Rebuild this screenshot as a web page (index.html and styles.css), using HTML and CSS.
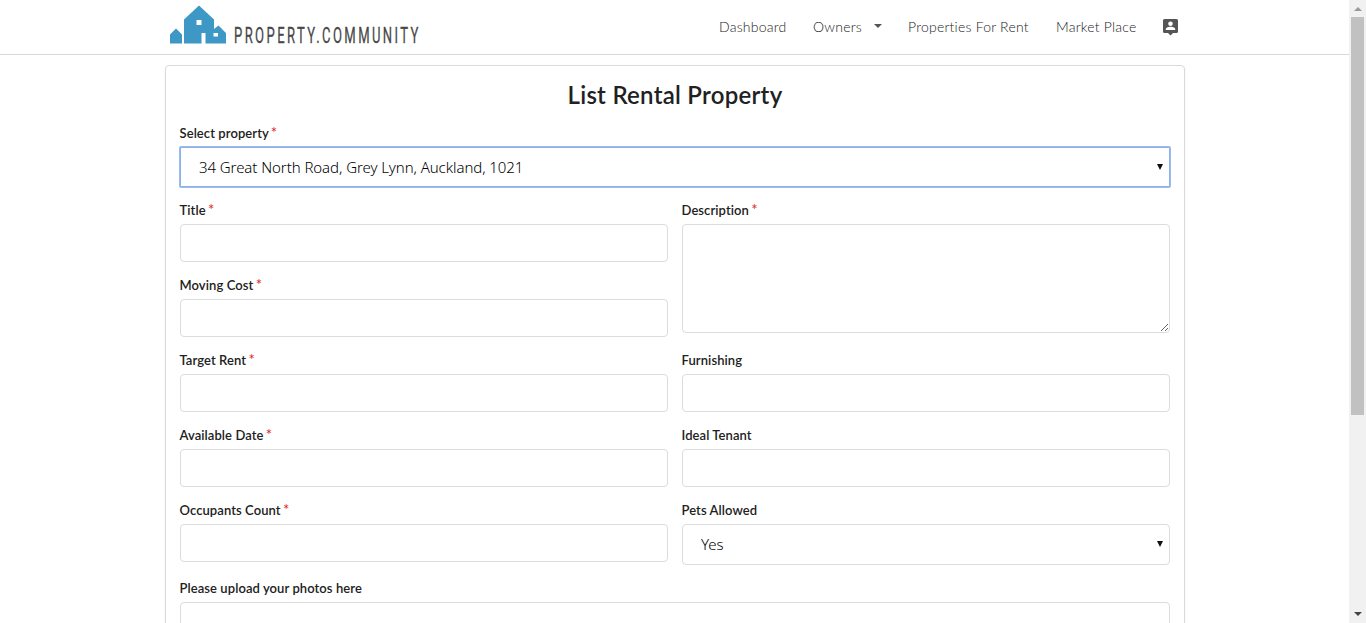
FILE: index.html
```html
<!DOCTYPE html>
<html lang="en">
<head>
<meta charset="utf-8">
<title>List Rental Property</title>
<link rel="stylesheet" href="styles.css">
</head>
<body>
<div class="page">
  <header class="topbar">
    <a class="brand">
      <svg class="logo" width="260" height="54" viewBox="0 0 260 54">
        <path fill="#3e98c5" d="M5 43.500V34.500L11 28.500L17 34.500V43.500ZM19 43.500V19.500L34 5.500L49 19.500V29L53.500 25.500L61 33V43.500H40.500V33H36.500V43.500Z"/>
        <path fill="#fff" d="M31.500 20H36.500V25H31.500ZM48.500 33H53V36.500H48.500Z"/>
        <text class="brand-text" x="119" y="43.500" textLength="318" lengthAdjust="spacing" transform="scale(.58 1)">PROPERTY.COMMUNITY</text>
      </svg>
    </a>
    <nav class="menu">
      <a class="dash">Dashboard</a>
      <a class="owners">Owners<i class="caret"></i></a>
      <a class="rent">Properties For Rent</a>
      <a class="market">Market Place</a>
      <svg class="user" width="15" height="17" viewBox="0 0 15 17"><path fill="#555" d="M1.500 0h12A1.500 1.500 0 0 1 15 1.500v11a1.500 1.500 0 0 1-1.500 1.500H10l-2.500 2.500L5 14H1.500A1.500 1.500 0 0 1 0 12.500v-11A1.500 1.500 0 0 1 1.500 0z"/><circle cx="7.500" cy="4.700" r="2.300" fill="#fff"/><path fill="#fff" d="M2.800 11V10c0-1.500 3-2.300 4.700-2.300s4.700.8 4.700 2.300v1z"/></svg>
    </nav>
  </header>
  <main class="card">
    <h1>List Rental Property</h1>
    <form class="grid">
      <div class="field wide"><label>Select property <b>*</b></label><div class="pick focus"><select><option>34 Great North Road, Grey Lynn, Auckland, 1021</option></select></div></div>
      <div class="field"><label>Title <b>*</b></label><input type="text"></div>
      <div class="field tall"><label>Description <b>*</b></label><textarea></textarea></div>
      <div class="field"><label>Moving Cost <b>*</b></label><input type="text"></div>
      <div class="field"><label>Target Rent <b>*</b></label><input type="text"></div>
      <div class="field"><label>Furnishing</label><input type="text"></div>
      <div class="field"><label>Available Date <b>*</b></label><input type="text"></div>
      <div class="field"><label>Ideal Tenant</label><input type="text"></div>
      <div class="field"><label>Occupants Count <b>*</b></label><input type="text"></div>
      <div class="field"><label>Pets Allowed</label><div class="pick"><select><option>Yes</option></select></div></div>
      <div class="field wide"><label>Please upload your photos here</label><div class="upload"></div></div>
    </form>
  </main>
</div>
<aside class="scrollbar"><i class="up"></i><div class="thumb"></div><i class="down"></i></aside>
</body>
</html>
```
FILE: styles.css
```css
* { box-sizing: border-box; }
body { margin: 0; height: 623px; overflow: hidden; display: flex; background: #fff; color: #212121; font-family: Lato, sans-serif; font-variant-ligatures: none; }
.page { width: 1349px; height: 623px; overflow: hidden; }
.topbar { height: 55px; border-bottom: 1px solid #d8d8d8; padding: 0 171px 0 165px; display: flex; justify-content: space-between; }
.brand, .logo { display: block; height: 54px; }
.brand-text { font-family: Roboto, sans-serif; font-size: 22.500px; fill: #484848; stroke: #484848; stroke-width: .3px; }
.menu { display: flex; align-items: center; font-size: 14px; font-weight: 300; letter-spacing: .22px; color: #222; white-space: nowrap; }
.menu a { display: flex; align-items: center; padding-bottom: 2px; }
.dash { width: 94px; }
.owners { width: 95px; }
.rent { width: 148px; }
.market { width: 107px; }
.caret { margin-left: 12px; border: 4px solid transparent; border-top-color: #555; border-bottom: 0; }
.user { margin-top: 1px; }
.card { margin: 10px 0 0 165px; width: 1020px; height: 700px; border: 1px solid #d9dadb; border-radius: 4px; padding: 0 14px; box-shadow: 0 1px 2px rgba(34, 36, 38, .08); }
h1 { margin: 0; height: 57px; line-height: 58px; font-size: 24px; font-weight: 600; letter-spacing: .26px; text-align: center; }
.grid { display: grid; grid-template-columns: 488px 488px; column-gap: 14px; row-gap: 13px; }
.wide { grid-column: span 2; }
.tall { grid-row: span 2; }
label { display: block; height: 20px; margin: 0 0 4px -.5px; line-height: 20px; font-size: 13px; font-weight: 600; letter-spacing: .08px; white-space: nowrap; }
label b { color: #e02020; font-size: 15px; font-weight: 400; line-height: 1; margin-left: -1px; }
input, textarea, select, .upload { display: block; width: 100%; height: 38px; border: 1px solid #dbdcdd; border-radius: 4px; background: #fff; outline: 0; }
textarea { height: 109px; resize: vertical; }
.pick { display: grid; align-items: center; height: 41px; }
.pick::after { content: ""; grid-area: 1 / 1; justify-self: end; margin: 0 7px 2px 0; border: 3.5px solid transparent; border-top: 6px solid #111; border-bottom: 0; pointer-events: none; }
select { grid-area: 1 / 1; height: 41px; appearance: none; padding: 0 17px 1px 18px; font: 300 15px "Noto Sans", sans-serif; letter-spacing: -.07px; color: #000; }
.focus { height: 40px; }
.focus::after { margin-bottom: 0; }
.focus select { height: 40px; padding-bottom: 0; border-color: #8ab0ee; border-radius: 1px; box-shadow: 0 0 0 1px #9cbcf0; }
.upload { height: 100px; }
.scrollbar { width: 17px; height: 623px; background: #f1f1f1; display: flex; flex-direction: column; align-items: center; }
.up { margin: 7px 0 6px; border: 4px solid transparent; border-bottom-color: #999; border-top: 0; }
.thumb { width: 13px; height: 398px; background: #c1c1c1; }
.down { margin-top: 197px; border: 4px solid transparent; border-top-color: #444; border-bottom: 0; }
```
